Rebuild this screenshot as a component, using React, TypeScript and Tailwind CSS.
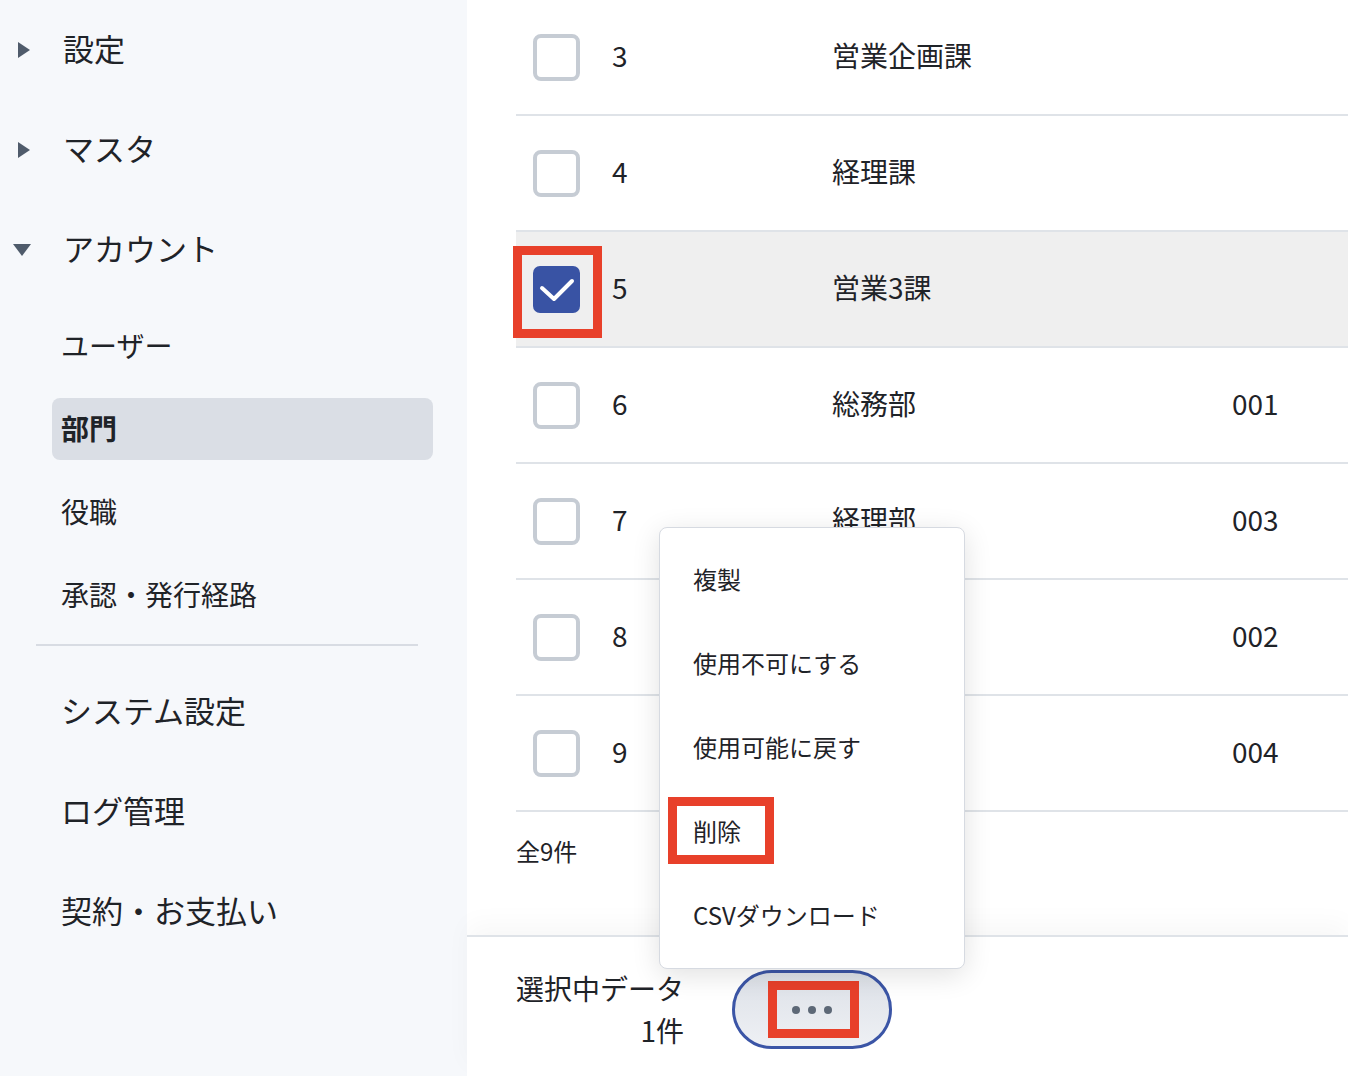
import React from "react";

/* =====================================================
   Data
===================================================== */

type Dept = {
  no: number;
  name: string;
  code: string;
  checked?: boolean;
};

// rows 8 / 9 names sit under the open menu, so they are left blank here
const rows: Dept[] = [
  { no: 3, name: "営業企画課", code: "" },
  { no: 4, name: "経理課", code: "" },
  { no: 5, name: "営業3課", code: "", checked: true },
  { no: 6, name: "総務部", code: "001" },
  { no: 7, name: "経理部", code: "003" },
  { no: 8, name: "", code: "002" },
  { no: 9, name: "", code: "004" },
];

const menuItems = [
  "複製",
  "使用不可にする",
  "使用可能に戻す",
  "削除",
  "CSVダウンロード",
];

/* =====================================================
   Small helpers
===================================================== */

function Caret({ open }: { open?: boolean }) {
  if (open) {
    return (
      <svg width="18" height="12" viewBox="0 0 18 12" className="ml-[13px]">
        <path d="M0 0 L18 0 L9 12 Z" fill="#4f5b6b" />
      </svg>
    );
  }
  return (
    <svg width="12" height="16" viewBox="0 0 12 16" className="ml-[18px]">
      <path d="M0 0 L12 8 L0 16 Z" fill="#4f5b6b" />
    </svg>
  );
}

function Checkbox({ checked }: { checked?: boolean }) {
  if (checked) {
    return (
      <div className="w-[47px] h-[47px] rounded-[7px] bg-[#3953a4] flex items-center justify-center">
        <svg width="47" height="47" viewBox="0 0 47 47">
          <path
            d="M9 22 L21 33 L39 15"
            fill="none"
            stroke="#ffffff"
            strokeWidth="4"
            strokeLinecap="round"
            strokeLinejoin="round"
          />
        </svg>
      </div>
    );
  }
  return (
    <div className="w-[47px] h-[47px] rounded-[8px] border-[4px] border-[#c6ccd4] bg-white" />
  );
}

/* =====================================================
   Sidebar
===================================================== */

function Sidebar() {
  const top = [
    { label: "設定", open: false },
    { label: "マスタ", open: false },
    { label: "アカウント", open: true },
  ];
  const subs = ["ユーザー", "部門", "役職", "承認・発行経路"];
  const bottom = ["システム設定", "ログ管理", "契約・お支払い"];

  return (
    <aside className="w-[467px] shrink-0 h-full bg-[#f6f8fb] text-[#1f2328]">
      {top.map((t) => (
        <div key={t.label} className="h-[100px] flex items-center">
          <div className="w-[63px] flex items-center">
            <Caret open={t.open} />
          </div>
          <span className="text-[31px] leading-none pb-[6px]">{t.label}</span>
        </div>
      ))}

      <div className="mt-[15px] flex flex-col gap-[21px]">
        {subs.map((s) => (
          <div
            key={s}
            className={`ml-[52px] w-[381px] h-[62px] rounded-[8px] pl-[9px] pb-[3px] flex items-center text-[28px] leading-none ${
              s === "部門" ? "bg-[#dadee5] font-bold" : ""
            }`}
          >
            {s}
          </div>
        ))}
      </div>

      <div className="mt-[18px] ml-[36px] w-[382px] h-[2px] bg-[#d8dce3]" />

      <div className="mt-[16px]">
        {bottom.map((b) => (
          <div
            key={b}
            className="h-[100px] pl-[61px] pb-[6px] flex items-center text-[31px] leading-none"
          >
            {b}
          </div>
        ))}
      </div>
    </aside>
  );
}

/* =====================================================
   Main
===================================================== */

export default function App() {
  return (
    <div
      className="w-[1348px] h-[1076px] flex overflow-hidden bg-white text-[#1f2328]"
      style={{ fontFamily: '"Noto Sans CJK JP", "Noto Sans", sans-serif' }}
    >
      <Sidebar />

      <main className="relative flex-1 flex flex-col h-full">
        {/* table */}
        <div className="flex-1 overflow-hidden pl-[49px]">
          {rows.map((r) => (
            <div
              key={r.no}
              className={`h-[116px] border-b-2 border-[#dfe3e8] flex items-center text-[28px] leading-none ${
                r.checked ? "bg-[#efefef]" : ""
              }`}
            >
              <div className="w-[96px] pl-[17px] relative">
                <Checkbox checked={r.checked} />
                {r.checked && (
                  <div className="absolute left-[-3px] top-[-20px] w-[89px] h-[92px] border-[9px] border-[#e8402a]" />
                )}
              </div>
              <div className="w-[220px] pb-[4px]">{r.no}</div>
              <div className="w-[400px] pb-[4px]">{r.name}</div>
              <div className="pb-[4px]">{r.code}</div>
            </div>
          ))}
          <div className="pt-[27px] text-[24px] leading-none">全9件</div>
        </div>

        {/* footer */}
        <div className="h-[141px] shrink-0 border-t-2 border-[#dfe3e8] bg-white shadow-[0_-12px_24px_rgba(0,0,0,0.03)] pl-[49px] pt-[30px] flex items-start">
          <div className="inline-flex flex-col items-end text-[28px] leading-[42px]">
            <span>選択中データ</span>
            <span>1件</span>
          </div>
          <div className="ml-[48px] mt-[3px] w-[160px] h-[79px] rounded-full border-[3px] border-[#3b55a6] bg-gradient-to-b from-[#dde1e8] to-[#eef0f4] flex items-center justify-center relative">
            <div className="flex gap-[8px]">
              <span className="w-[8px] h-[8px] rounded-full bg-[#5d6877]" />
              <span className="w-[8px] h-[8px] rounded-full bg-[#5d6877]" />
              <span className="w-[8px] h-[8px] rounded-full bg-[#5d6877]" />
            </div>
            <div className="absolute left-[33px] top-[8px] w-[91px] h-[57px] border-[9px] border-[#e8402a]" />
          </div>
        </div>

        {/* dropdown menu */}
        <div className="absolute left-[192px] top-[527px] w-[306px] h-[442px] rounded-[8px] border border-[#d6dae1] bg-white shadow-[0_6px_28px_rgba(0,0,0,0.12)] py-[11px]">
          {menuItems.map((m) => (
            <div
              key={m}
              className="relative h-[84px] pl-[33px] pb-[4px] flex items-center text-[24px] leading-none"
            >
              {m}
              {m === "削除" && (
                <div className="absolute left-[8px] top-[6px] w-[106px] h-[67px] border-[9px] border-[#e8402a]" />
              )}
            </div>
          ))}
        </div>
      </main>
    </div>
  );
}
